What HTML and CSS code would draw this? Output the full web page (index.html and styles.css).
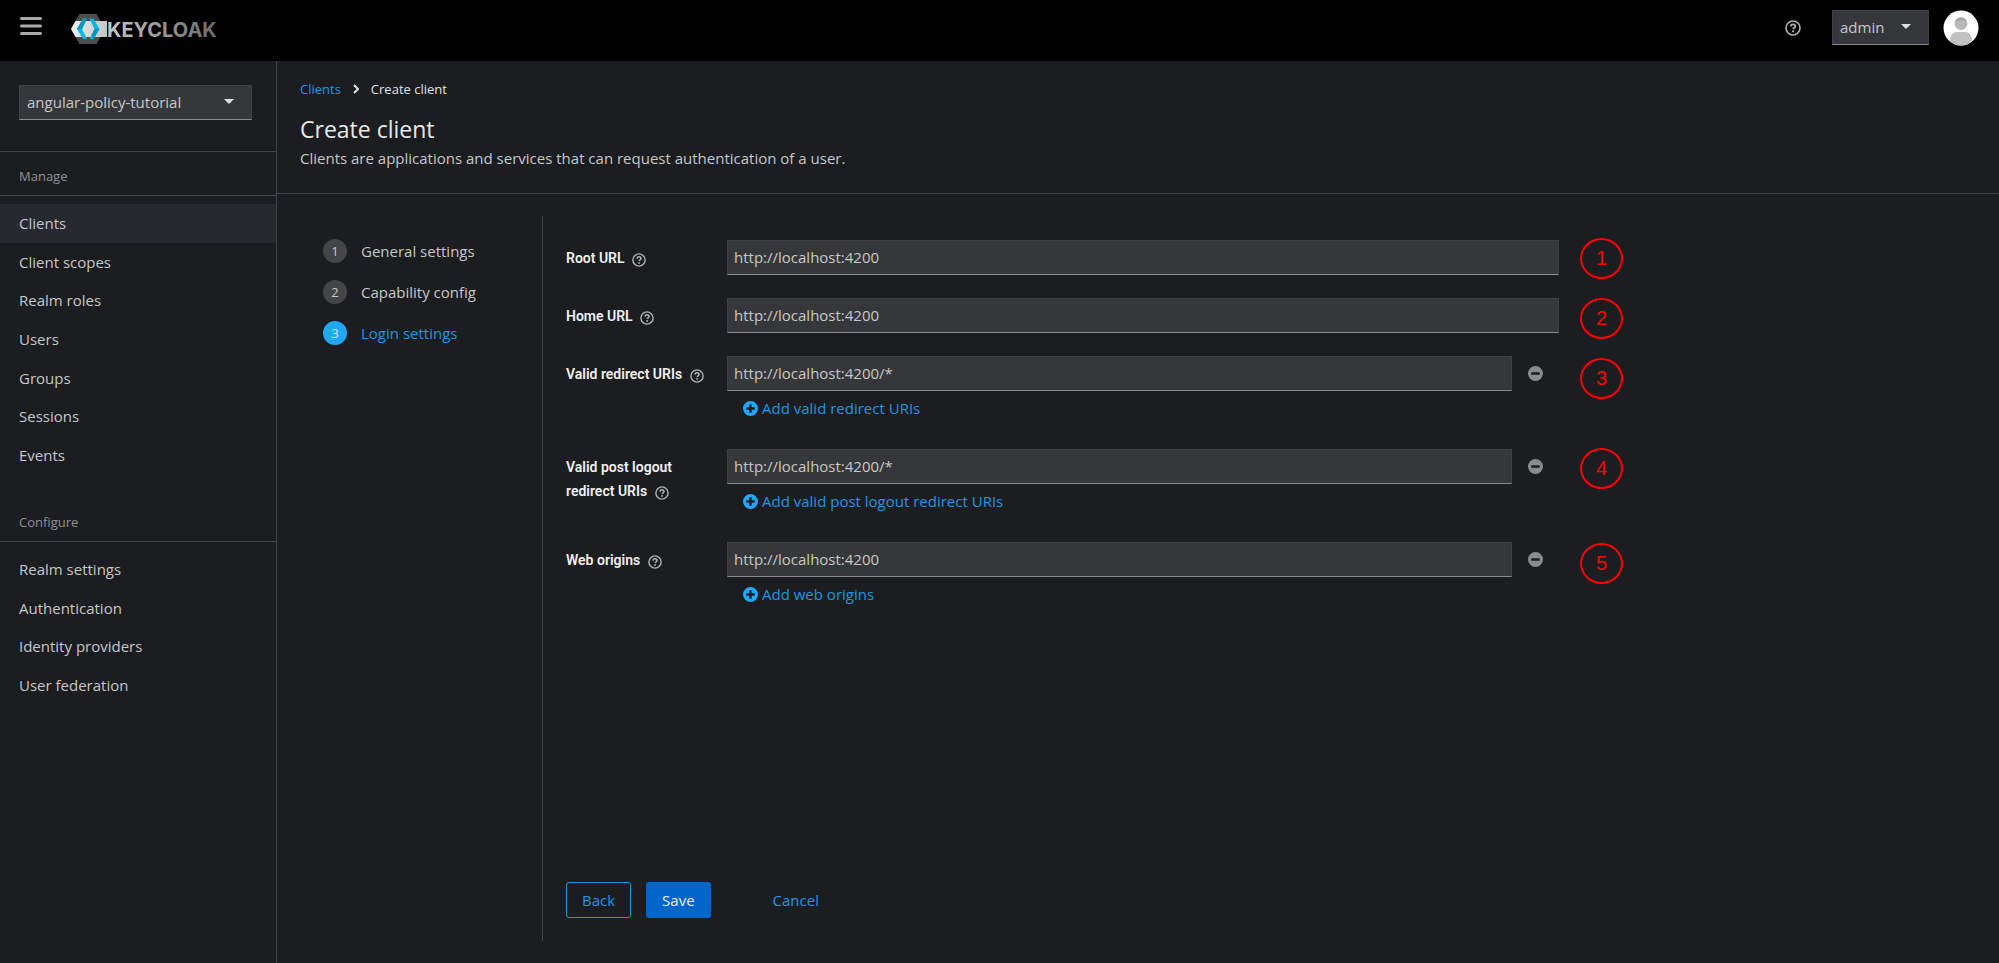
FILE: index.html
```html
<!DOCTYPE html>
<html lang="en">
<head>
  <meta charset="UTF-8">
  <meta name="viewport" content="width=device-width, initial-scale=1.0">
  <title>Create client - Keycloak</title>
  <link rel="stylesheet" href="styles.css">
</head>
<body>
  <!-- Shared icons -->
  <svg class="sprite" aria-hidden="true">
    <symbol id="icon-help" viewBox="0 0 16 16">
      <circle cx="8" cy="8" r="7" fill="none" stroke="currentColor" stroke-width="1.6"/>
      <path d="M5.7 6.3C5.9 5 6.8 4.3 8 4.3c1.3 0 2.3.8 2.3 2 0 1.5-2.1 1.5-2.1 2.9" fill="none" stroke="currentColor" stroke-width="1.8"/>
      <circle cx="8.1" cy="11.3" r="1.1" fill="currentColor"/>
    </symbol>
    <symbol id="icon-plus" viewBox="0 0 16 16">
      <path fill="currentColor" fill-rule="evenodd" d="M8 0a8 8 0 1 0 0 16A8 8 0 0 0 8 0zM6.7 3.5h2.600v3.200h3.200v2.600H9.300v3.200H6.700V9.300H3.500V6.700h3.200z"/>
    </symbol>
    <symbol id="icon-minus" viewBox="0 0 16 16">
      <path fill="currentColor" fill-rule="evenodd" d="M8 0a8 8 0 1 0 0 16A8 8 0 0 0 8 0zM3.5 6.7h9v2.600h-9z"/>
    </symbol>
  </svg>

  <header class="header">
    <button class="menu-button" type="button" aria-label="Global navigation">
      <svg width="22" height="20" viewBox="0 0 22 20"><path d="M1.5 2.5h19M1.5 10h19M1.5 17.5h19" stroke="currentColor" stroke-width="3" stroke-linecap="round"/></svg>
    </button>
    <a class="logo" href="#" aria-label="Keycloak">
      <svg width="150" height="30" viewBox="0 0 150 30">
        <defs>
          <linearGradient id="logo-text" gradientUnits="userSpaceOnUse" x1="36" y1="0" x2="148" y2="0">
            <stop offset="0" stop-color="#c8c8c8"/>
            <stop offset="1" stop-color="#666"/>
          </linearGradient>
          <linearGradient id="logo-bar" x1="0" y1="0" x2="1" y2="0">
            <stop offset="0" stop-color="#ededed"/>
            <stop offset="1" stop-color="#c4c4c4"/>
          </linearGradient>
        </defs>
        <path d="M8.5 0h17L34 15l-8.5 15h-17L0 15z" fill="#4d4d4d"/>
        <path d="M4.5 7H36v16H4.5L0 15z" fill="url(#logo-bar)"/>
        <path d="M12 4.5h4L11 15l5 10h-4L6 15z" fill="#00b8e3"/>
        <path d="M12 4.5h4L11 15H6z" fill="#0098bc"/>
        <path d="M18.5 4.5h4l6 10.500-6 10h-4l5-10z" fill="#00b8e3"/>
        <path d="M23.5 15h5l-6 10-2-4z" fill="#0098bc"/>
        <text class="logo-text" x="36" y="23" fill="url(#logo-text)">KEYCLOAK</text>
      </svg>
    </a>
    <div class="header-tools">
      <button class="help-button" type="button" aria-label="Help"><svg width="16" height="16"><use href="#icon-help"/></svg></button>
      <div class="select select-user">
        <select aria-label="User menu"><option>admin</option></select>
      </div>
      <svg class="avatar" width="36" height="36" viewBox="0 0 36 36" role="img" aria-label="Avatar">
        <clipPath id="avatar-clip"><circle cx="18" cy="18" r="17.5"/></clipPath>
        <g clip-path="url(#avatar-clip)">
          <rect width="36" height="36" fill="#fff"/>
          <path d="M7 36v-6c0-5 3-8 7-8h8c4 0 7 3 7 8v6z" fill="#c2c2c2"/>
          <path d="M11 31l2 5h-3zM25 31l-2 5h3z" fill="#adadad"/>
          <circle cx="18" cy="13.5" r="6.500" fill="#b8b8b8"/>
          <path d="M12 12a6.5 6.5 0 0 1 12 0c-3-2-9-2-12 0z" fill="#a6a6a6"/>
        </g>
      </svg>
    </div>
  </header>

  <div class="page">
    <nav class="sidebar" aria-label="Main">
      <div class="realm">
        <div class="select">
          <select aria-label="Realm"><option>angular-policy-tutorial</option></select>
        </div>
      </div>
      <h2 class="nav-title">Manage</h2>
      <ul class="nav-list nav-manage">
        <li><a class="active" href="#">Clients</a></li>
        <li><a href="#">Client scopes</a></li>
        <li><a href="#">Realm roles</a></li>
        <li><a href="#">Users</a></li>
        <li><a href="#">Groups</a></li>
        <li><a href="#">Sessions</a></li>
        <li><a href="#">Events</a></li>
      </ul>
      <h2 class="nav-title">Configure</h2>
      <ul class="nav-list nav-configure">
        <li><a href="#">Realm settings</a></li>
        <li><a href="#">Authentication</a></li>
        <li><a href="#">Identity providers</a></li>
        <li><a href="#">User federation</a></li>
      </ul>
    </nav>

    <main class="content">
      <div class="page-head">
        <div class="breadcrumb">
          <a href="#">Clients</a>
          <svg width="6" height="10" viewBox="0 0 6 10"><path d="M1 1l4 4-4 4" fill="none" stroke="currentColor" stroke-width="2"/></svg>
          <span>Create client</span>
        </div>
        <h1>Create client</h1>
        <p>Clients are applications and services that can request authentication of a user.</p>
      </div>

      <div class="wizard">
        <ol class="steps">
          <li><a href="#"><span class="step-number">1</span>General settings</a></li>
          <li><a href="#"><span class="step-number">2</span>Capability config</a></li>
          <li><a class="current" href="#"><span class="step-number">3</span>Login settings</a></li>
        </ol>

        <form class="form">
          <div class="fields">
            <div class="field">
              <div class="label"><label for="root-url">Root URL</label> <button type="button" aria-label="Help for root URL"><svg width="14" height="14"><use href="#icon-help"/></svg></button></div>
              <input id="root-url" type="text" value="http://localhost:4200">
            </div>
            <div class="field">
              <div class="label"><label for="home-url">Home URL</label> <button type="button" aria-label="Help for home URL"><svg width="14" height="14"><use href="#icon-help"/></svg></button></div>
              <input id="home-url" type="text" value="http://localhost:4200">
            </div>
            <div class="field">
              <div class="label"><label for="redirect-uris">Valid redirect URIs</label> <button type="button" aria-label="Help for valid redirect URIs"><svg width="14" height="14"><use href="#icon-help"/></svg></button></div>
              <div class="multi">
                <div class="multi-row">
                  <input id="redirect-uris" type="text" value="http://localhost:4200/*">
                  <button class="remove" type="button" aria-label="Remove"><svg width="15" height="15"><use href="#icon-minus"/></svg></button>
                </div>
                <button class="add" type="button"><svg width="15" height="15"><use href="#icon-plus"/></svg>Add valid redirect URIs</button>
              </div>
            </div>
            <div class="field">
              <div class="label"><label for="logout-uris">Valid post logout redirect URIs</label> <button type="button" aria-label="Help for valid post logout redirect URIs"><svg width="14" height="14"><use href="#icon-help"/></svg></button></div>
              <div class="multi">
                <div class="multi-row">
                  <input id="logout-uris" type="text" value="http://localhost:4200/*">
                  <button class="remove" type="button" aria-label="Remove"><svg width="15" height="15"><use href="#icon-minus"/></svg></button>
                </div>
                <button class="add" type="button"><svg width="15" height="15"><use href="#icon-plus"/></svg>Add valid post logout redirect URIs</button>
              </div>
            </div>
            <div class="field">
              <div class="label"><label for="web-origins">Web origins</label> <button type="button" aria-label="Help for web origins"><svg width="14" height="14"><use href="#icon-help"/></svg></button></div>
              <div class="multi">
                <div class="multi-row">
                  <input id="web-origins" type="text" value="http://localhost:4200">
                  <button class="remove" type="button" aria-label="Remove"><svg width="15" height="15"><use href="#icon-minus"/></svg></button>
                </div>
                <button class="add" type="button"><svg width="15" height="15"><use href="#icon-plus"/></svg>Add web origins</button>
              </div>
            </div>

            <!-- Numbered notes over the form -->
            <span class="note note-1">1</span>
            <span class="note note-2">2</span>
            <span class="note note-3">3</span>
            <span class="note note-4">4</span>
            <span class="note note-5">5</span>
          </div>

          <div class="actions">
            <button class="button secondary" type="button">Back</button>
            <button class="button primary" type="submit">Save</button>
            <button class="button link" type="button">Cancel</button>
          </div>
        </form>
      </div>
    </main>
  </div>
</body>
</html>
```
FILE: styles.css
```css
* {
  box-sizing: border-box;
}

body {
  margin: 0;
  min-height: 100vh;
  display: flex;
  flex-direction: column;
  background: #1b1d21;
  color: #c6c7c8;
  font-family: "Open Sans", "Noto Sans", sans-serif;
  font-size: 15px;
  line-height: 24px;
}

a {
  color: #1f96e0;
  text-decoration: none;
}

button,
input,
select {
  font: inherit;
  color: inherit;
}

button {
  padding: 0;
  border: 0;
  background: none;
  cursor: pointer;
}

svg {
  display: block;
}

ul,
ol {
  margin: 0;
  padding: 0;
  list-style: none;
}

.sprite {
  position: absolute;
  width: 0;
  height: 0;
}

/* Header */
.header {
  display: flex;
  align-items: center;
  height: 61px;
  padding: 0 20px 6px;
  background: #000;
}

.menu-button {
  margin-bottom: 4px;
  color: #a9aaab;
}

.logo {
  margin-left: 29px;
  padding-top: 2px;
}

.logo-text {
  font-family: Inter, sans-serif;
  font-size: 20px;
  font-weight: 700;
}

.header-tools {
  display: flex;
  align-items: center;
  margin-left: auto;
}

.help-button {
  margin-right: 31px;
  color: #b0b1b2;
}

.avatar {
  margin-left: 14px;
}

.select {
  position: relative;
}

.select::after {
  content: "";
  position: absolute;
  top: 14px;
  right: 18px;
  border: 5px solid transparent;
  border-top-color: #e0e0e0;
  border-bottom: 0;
  pointer-events: none;
}

.select select {
  display: block;
  width: 100%;
  height: 35px;
  padding: 0 7px 2px;
  appearance: none;
  border: 1px solid #3f4043;
  border-bottom: 1px solid #8a8d90;
  border-radius: 0;
  background: #36373a;
}

.select-user {
  width: 97px;
}

/* Sidebar */
.page {
  flex: 1;
  display: flex;
}

.sidebar {
  flex: none;
  width: 277px;
  border-right: 1px solid #444548;
}

.realm {
  padding: 24px 24px 31px 19px;
  border-bottom: 1px solid #444548;
}

.nav-title {
  margin: 0 0 8px;
  padding: 12px 19px 7px;
  border-bottom: 1px solid #444548;
  color: #8f9194;
  font-size: 13px;
  font-weight: 400;
}

.nav-list {
  display: grid;
  grid-auto-rows: 1fr;
}

.nav-list a {
  display: flex;
  align-items: center;
  height: 100%;
  padding: 0 19px;
  color: inherit;
}

.nav-list .active {
  background: #26292d;
}

.nav-manage {
  min-height: 270px;
  margin-bottom: 24px;
}

.nav-configure {
  min-height: 154px;
}

/* Content */
.content {
  flex: 1;
  display: flex;
  flex-direction: column;
}

.page-head {
  padding: 16px 23px 23px;
  border-bottom: 1px solid #444548;
}

.breadcrumb {
  display: flex;
  align-items: center;
  gap: 12px;
  color: #e0e0e0;
  font-size: 13px;
}

.page-head h1 {
  margin: 13px 0 2px;
  color: #e8e8e8;
  font-size: 23px;
  font-weight: 400;
  line-height: 30px;
}

.page-head p {
  margin: 0;
}

.wizard {
  flex: 1;
  display: flex;
  padding: 22px 24px 22px 0;
}

.steps {
  display: flex;
  flex-direction: column;
  gap: 17px;
  width: 265px;
  padding: 23px 24px 0 46px;
}

.steps a {
  display: flex;
  align-items: center;
  gap: 14px;
  color: inherit;
}

.step-number {
  width: 24px;
  height: 24px;
  border-radius: 50%;
  background: #444548;
  font-size: 13px;
  text-align: center;
}

.steps .current {
  color: #1f96e0;
}

.current .step-number {
  background: #1fa7f8;
  color: #e0e0e0;
}

/* Form */
.form {
  flex: 1;
  display: flex;
  flex-direction: column;
  padding: 24px 24px 23px 23px;
  border-left: 1px solid #444548;
}

.fields {
  position: relative;
  flex: 1;
  max-width: 993px;
}

.field {
  display: grid;
  grid-template-columns: 141px 1fr;
  gap: 20px;
  margin-bottom: 23px;
}

.label {
  padding-top: 6px;
  color: #f0f0f0;
  font-family: Roboto, sans-serif;
  font-size: 14px;
  font-weight: 600;
}

.label button {
  margin-left: 4px;
  vertical-align: -4px;
  color: #b0b1b2;
}

.field input {
  width: 100%;
  height: 35px;
  padding: 0 6px 2px;
  border: 1px solid #3f4043;
  border-bottom: 1px solid #8a8d90;
  border-radius: 0;
  background: #36373a;
}

.multi {
  margin-bottom: 6px;
}

.multi-row {
  display: flex;
  align-items: center;
}

.remove {
  margin: 0 16px;
  color: #8a8b8d;
}

.add {
  display: flex;
  align-items: center;
  gap: 4px;
  margin: 5px 0 0 16px;
  color: #1f96e0;
}

.add svg {
  color: #1fa7f8;
}

.note {
  position: absolute;
  left: 1014px;
  width: 43px;
  height: 41px;
  border: 2px solid #f00;
  border-radius: 50%;
  color: #f00;
  font-family: "Liberation Sans", sans-serif;
  font-size: 20px;
  line-height: 36px;
  text-align: center;
}

.note-1 {
  top: -2px;
}

.note-2 {
  top: 58px;
}

.note-3 {
  top: 118px;
}

.note-4 {
  top: 208px;
}

.note-5 {
  top: 303px;
}

.actions {
  display: flex;
  gap: 15px;
}

.button {
  height: 36px;
  padding: 0 15px;
  border: 1px solid transparent;
  border-radius: 3px;
}

.secondary {
  border-color: #1f96e0;
  color: #1f96e0;
}

.primary {
  background: #06c;
  color: #f0f0f0;
}

.link {
  margin-left: 31px;
  color: #1f96e0;
}
```
